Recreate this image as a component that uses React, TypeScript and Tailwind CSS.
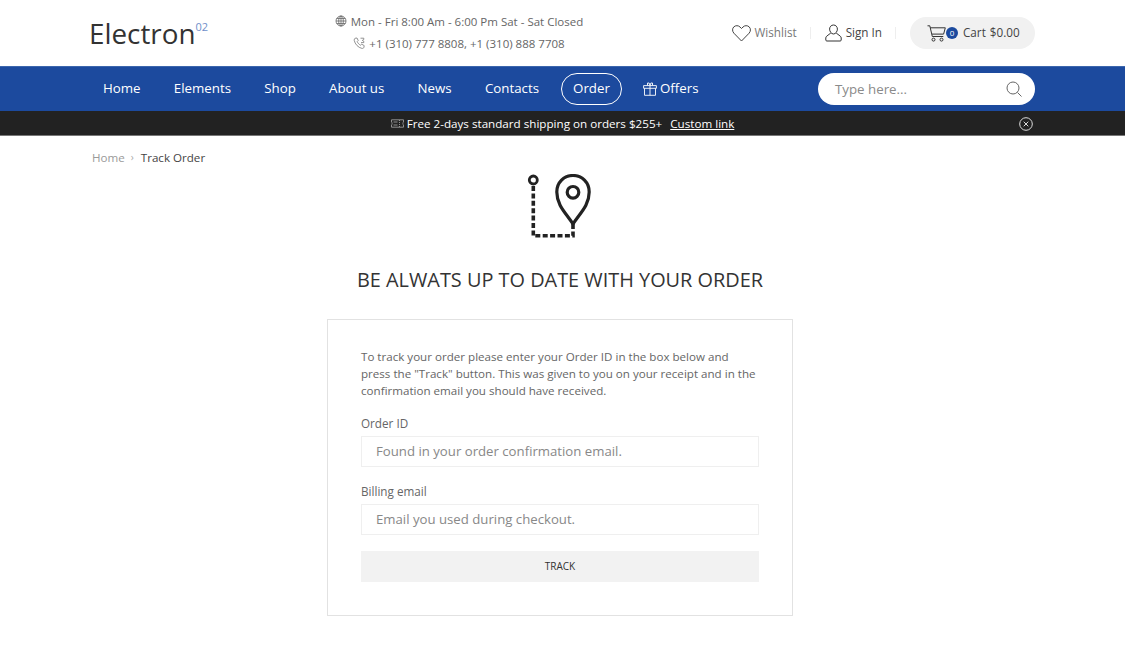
import React from "react";

const Globe = () => (
  <svg width="12" height="12" viewBox="0 0 12 12" fill="none" stroke="#666" strokeWidth="0.8">
    <circle cx="6" cy="6" r="5" />
    <ellipse cx="6" cy="6" rx="2.3" ry="5" />
    <path d="M1 6h10M1.700 3.500h8.600M1.700 8.500h8.600M6 1v10" />
  </svg>
);
const Phone = () => (
  <svg width="13" height="13" viewBox="0 0 13 13" fill="none" stroke="#777" strokeWidth="0.8">
    <path d="M2.200 1.200 4 1l1.200 2.600-1 1c.6 1.500 1.900 2.900 3.400 3.600l1.100-1 2.500 1.400-.3 1.800c-.2.7-1.100 1.200-2 1C5.200 10.600 1.900 7.100 1.200 3.300c-.1-.9.3-1.800 1-2.100Z" />
    <path d="M7.500 1.200h3.300v1.300l-1.500.9 1.500.9v1.300H8" />
  </svg>
);
const Heart = () => (
  <svg width="19" height="17" viewBox="0 0 19 17" fill="none" stroke="#444" strokeWidth="1">
    <path d="M9.500 16 1.900 8.200C.1 6.200.2 3.500 1.800 1.900 3.600.2 6.300.3 8 2l1.500 1.500L11 2c1.700-1.700 4.400-1.800 6.200-.1 1.600 1.600 1.700 4.300-.1 6.300L9.500 16Z" />
  </svg>
);
const User = () => (
  <svg width="17" height="18" viewBox="0 0 17 18" fill="none" stroke="#333" strokeWidth="1">
    <path d="M8.500 1c2.300 0 3.900 1.800 3.900 4.100s-1.700 4.900-3.900 4.900-3.900-2.600-3.900-4.900S6.200 1 8.500 1Z" />
    <path d="M5.800 9 1.700 12.200c-.5.400-.9 1-.9 1.700v2.100c0 .6.400 1 1 1h13.400c.6 0 1-.4 1-1v-2.100c0-.7-.4-1.300-.9-1.700L11.200 9" />
  </svg>
);
const Cart = () => (
  <svg width="19" height="17" viewBox="0 0 19 17" fill="none" stroke="#333" strokeWidth="1">
    <path d="M.5.800h2.300l2.500 10.700h11" />
    <path d="M3.300 2.800h15l-1.700 6.300H5" />
    <circle cx="6.500" cy="14.600" r="1.500" />
    <circle cx="14.500" cy="14.600" r="1.500" />
  </svg>
);
const Gift = () => (
  <svg width="14" height="14" viewBox="0 0 14 14" fill="none" stroke="#fff" strokeWidth="0.9">
    <path d="M.6 3.600h12.800v2.700H.6zM1.500 6.300v7h11v-7M7 3.600v9.700" />
    <path d="M4.500 3.400V1h1.600l.9 2.400.9-2.400h1.600v2.400" />
  </svg>
);
const Search = () => (
  <svg width="16" height="16" viewBox="0 0 16 16" fill="none" stroke="#666" strokeWidth="1">
    <circle cx="7" cy="7" r="6" />
    <path d="m11.500 11.500 4 4" />
  </svg>
);
const Ticket = () => (
  <svg width="13" height="9" viewBox="0 0 13 9" fill="none" stroke="#aaa" strokeWidth="0.8">
    <path d="M.5.800h12v2.300c-.8.300-.8 2.500 0 2.800v2.300H.5V5.900c.8-.3.800-2.500 0-2.800V.8Z" />
    <path d="M8.500 1v7" strokeDasharray="1 1" />
    <path d="M2.500 3h4M2.500 6h4" />
  </svg>
);
const CloseCircle = () => (
  <svg width="14" height="14" viewBox="0 0 14 14" fill="none" stroke="#ddd" strokeWidth="1">
    <circle cx="7" cy="7" r="6.300" />
    <path d="m4.700 4.700 4.600 4.600M9.300 4.700 4.700 9.300" />
  </svg>
);
const TrackIcon = () => (
  <svg width="66" height="66" viewBox="0 0 66 66" fill="none" stroke="#222" strokeWidth="3.200">
    <circle cx="6.300" cy="6" r="4" strokeWidth="2.800" />
    <path d="M6.300 12V61.800H46V50" strokeDasharray="5 2.400" strokeWidth="3.600" />
    <path d="M46 50C40 40 29.800 32 29.800 18 29.800 8.500 37 1.500 46 1.500S62.200 8.500 62.200 18C62.200 32 52 40 46 50Z" strokeLinejoin="round" />
    <circle cx="46" cy="18.300" r="5.800" />
  </svg>
);

const navItems = ["Home", "Elements", "Shop", "About us", "News", "Contacts"];

export default function App() {
  return (
    <div className="w-[1125px] min-h-[662px] bg-white text-[#333] font-['Open_Sans',sans-serif]">
      <header className="h-[66px] flex items-center pl-[89px] pr-[90px]">
        <div className="w-[230px] flex items-start text-[#333]">
          <span className="text-[27.800px] leading-[34px]">Electron</span>
          <span className="text-[11px] leading-[14px] mt-[4px] text-[#6f8fca]">02</span>
        </div>
        <div className="w-[290px] flex flex-col items-center text-[11.500px] text-[#666] gap-[5px] leading-[17px] ml-[-5px] mt-[-2px]">
          <div className="flex items-center gap-[4px]"><Globe /><span>Mon - Fri 8:00 Am - 6:00 Pm Sat - Sat Closed</span></div>
          <div className="flex items-center gap-[3px]"><Phone /><span>+1 (310) 777 8808, +1 (310) 888 7708</span></div>
        </div>
        <div className="ml-auto flex items-center text-[11.700px]">
          <Heart />
          <span className="ml-[4px] text-[#777]">Wishlist</span>
          <span className="w-px h-[12px] bg-[#eee] ml-[13px] mr-[14px]" />
          <User />
          <span className="ml-[4px] text-[#444]">Sign In</span>
          <span className="w-px h-[12px] bg-[#eee] ml-[13px] mr-[14px]" />
          <div className="w-[125px] h-[32px] rounded-full bg-[#f1f1f1] flex items-center pl-[17px]">
            <Cart />
            <span className="w-[12px] h-[12px] rounded-full bg-[#1c4a9e] text-white text-[8px] flex items-center justify-center">0</span>
            <span className="ml-[5px] text-[#444]">Cart</span>
            <span className="ml-[4px] text-[#444]">$0.00</span>
          </div>
        </div>
      </header>

      <nav className="h-[45px] bg-[#1c4a9e] border-t border-[#3c66ad] flex items-center pl-[103px] pr-[90px] text-[13.300px] text-white">
        <ul className="flex items-center gap-[33.200px] mt-[-1px]">
          {navItems.map((n) => <li key={n}>{n}</li>)}
        </ul>
        <span className="ml-[22px] w-[61px] h-[32px] rounded-full border border-white flex items-center justify-center">Order</span>
        <span className="ml-[21px] flex items-center gap-[3px] mt-[-1px]"><Gift />Offers</span>
        <div className="ml-auto w-[217px] h-[32px] rounded-full bg-white flex items-center justify-between pl-[17px] pr-[13px]">
          <span className="text-[#8a8a8a] mt-[1px]">Type here...</span>
          <Search />
        </div>
      </nav>

      <div className="h-[25px] bg-[#222] border-b border-[#777] flex items-center relative justify-center text-[11.650px] text-white pt-[1px]">
        <div className="flex items-center">
          <Ticket />
          <span className="ml-[3px]">Free 2-days standard shipping on orders $255+</span>
          <span className="ml-[8px] underline">Custom link</span>
        </div>
        <span className="absolute left-[1019px] top-[6px] flex"><CloseCircle /></span>
      </div>

      <div className="pl-[92px] pt-[13px] flex items-center text-[11.600px] leading-[17px]">
        <span className="text-[#9a9a9a]">Home</span>
        <span className="ml-[6px] mr-[7px] text-[#aaa] text-[10px]">›</span>
        <span className="text-[#444]">Track Order</span>
      </div>

      <main className="flex flex-col items-center pr-[5px]">
        <div className="mt-[8px] flex"><TrackIcon /></div>
        <h1 className="mt-[26px] text-[19.900px] leading-[27px] text-[#333] uppercase">Be alwats up to date with your order</h1>
        <div className="mt-[26px] w-[466px] h-[297px] border border-[#e2e2e2] px-[33px] pt-[28px]">
          <p className="text-[11.600px] leading-[17px] text-[#666]">
            To track your order please enter your Order ID in the box below and press the "Track" button. This was given to you on your receipt and in the confirmation email you should have received.
          </p>
          <label className="block mt-[16px] text-[11.700px] leading-[17px] text-[#666]">Order ID</label>
          <div className="mt-[4px] h-[31px] border border-[#efefef] flex items-center pl-[14px] text-[13.200px] text-[#888]">Found in your order confirmation email.</div>
          <label className="block mt-[16px] text-[11.700px] leading-[17px] text-[#666]">Billing email</label>
          <div className="mt-[4px] h-[31px] border border-[#efefef] flex items-center pl-[14px] text-[13.200px] text-[#888]">Email you used during checkout.</div>
          <button className="mt-[16px] w-full h-[31px] bg-[#f2f2f2] text-[10px] text-[#333] uppercase flex items-center justify-center">Track</button>
        </div>
      </main>
    </div>
  );
}
